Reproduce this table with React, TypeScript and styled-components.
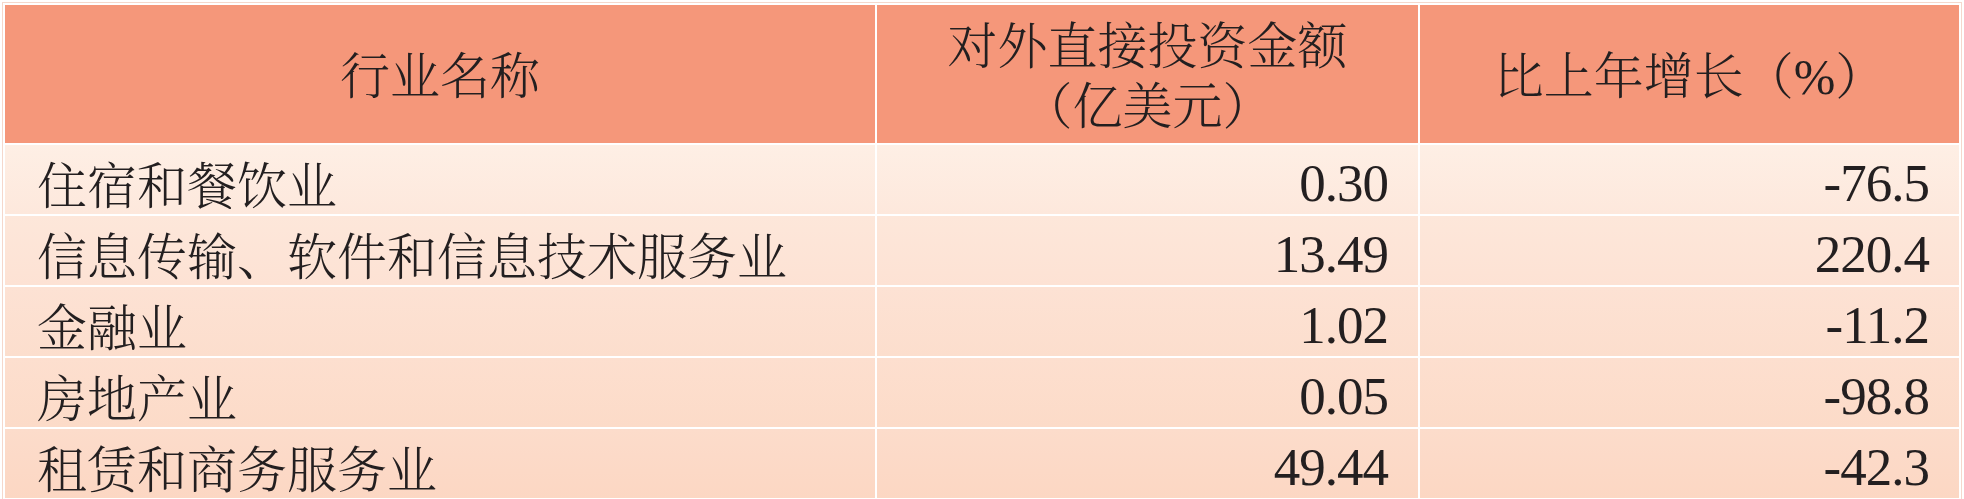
import React from "react";
import styled, { createGlobalStyle, css } from "styled-components";

const GlobalStyle = createGlobalStyle`
  html, body {
    margin: 0;
    padding: 0;
    background: #ffffff;
  }
`;

const Page = styled.div`
  padding: 2px;
  width: 1964px;
  box-sizing: border-box;
`;

const Frame = styled.div`
  border: 1px solid #f5d8cc;
  border-bottom: none;
  display: grid;
  grid-template-columns: 870px 541px 1fr;
  grid-template-rows: 138px repeat(5, 69px);
  gap: 2px;
  padding: 2px;
  background: #ffffff;
  color: #231f20;
`;

const cjk = `"Noto Serif CJK SC", "Noto Sans CJK SC", serif`;

const HeadCell = styled.div`
  background: #f5977a;
  display: flex;
  flex-direction: column;
  align-items: center;
  justify-content: center;
  font-family: "Liberation Serif", ${cjk};
  font-size: 50px;
  font-weight: 300;
  line-height: 60px;
  text-align: center;
  padding-top: 6px;
  box-sizing: border-box;
`;

const bodyCell = css<{ $from: string; $to: string }>`
  background: linear-gradient(to bottom, ${(p) => p.$from}, ${(p) => p.$to});
  display: flex;
  align-items: center;
  box-sizing: border-box;
  white-space: nowrap;
`;

const NameCell = styled.div<{ $from: string; $to: string }>`
  ${bodyCell};
  justify-content: flex-start;
  padding: 4px 0 0 32px;
  font-family: ${cjk};
  font-size: 50px;
  font-weight: 300;
`;

const NumCell = styled.div<{ $from: string; $to: string }>`
  ${bodyCell};
  justify-content: flex-end;
  padding: 6px 30px 0 0;
  font-family: "Liberation Serif", "Times New Roman", serif;
  font-size: 53px;
  font-weight: 400;
  letter-spacing: -1px;
`;

const shades: [string, string][] = [
  ["#feefe5", "#fde8dc"],
  ["#fde7da", "#fde2d4"],
  ["#fde2d4", "#fcdecd"],
  ["#fddfcf", "#fcdbc8"],
  ["#fcdccb", "#fcd7c3"],
];

const rows = [
  { name: "住宿和餐饮业", amount: "0.30", growth: "-76.5" },
  { name: "信息传输、软件和信息技术服务业", amount: "13.49", growth: "220.4" },
  { name: "金融业", amount: "1.02", growth: "-11.2" },
  { name: "房地产业", amount: "0.05", growth: "-98.8" },
  { name: "租赁和商务服务业", amount: "49.44", growth: "-42.3" },
];

export default function App() {
  return (
    <>
      <GlobalStyle />
      <Page>
        <Frame>
          <HeadCell>行业名称</HeadCell>
          <HeadCell>
            <span>对外直接投资金额</span>
            <span>（亿美元）</span>
          </HeadCell>
          <HeadCell>比上年增长（%）</HeadCell>
          {rows.map((r, i) => (
            <React.Fragment key={r.name}>
              <NameCell $from={shades[i][0]} $to={shades[i][1]}>{r.name}</NameCell>
              <NumCell $from={shades[i][0]} $to={shades[i][1]}>{r.amount}</NumCell>
              <NumCell $from={shades[i][0]} $to={shades[i][1]}>{r.growth}</NumCell>
            </React.Fragment>
          ))}
        </Frame>
      </Page>
    </>
  );
}
